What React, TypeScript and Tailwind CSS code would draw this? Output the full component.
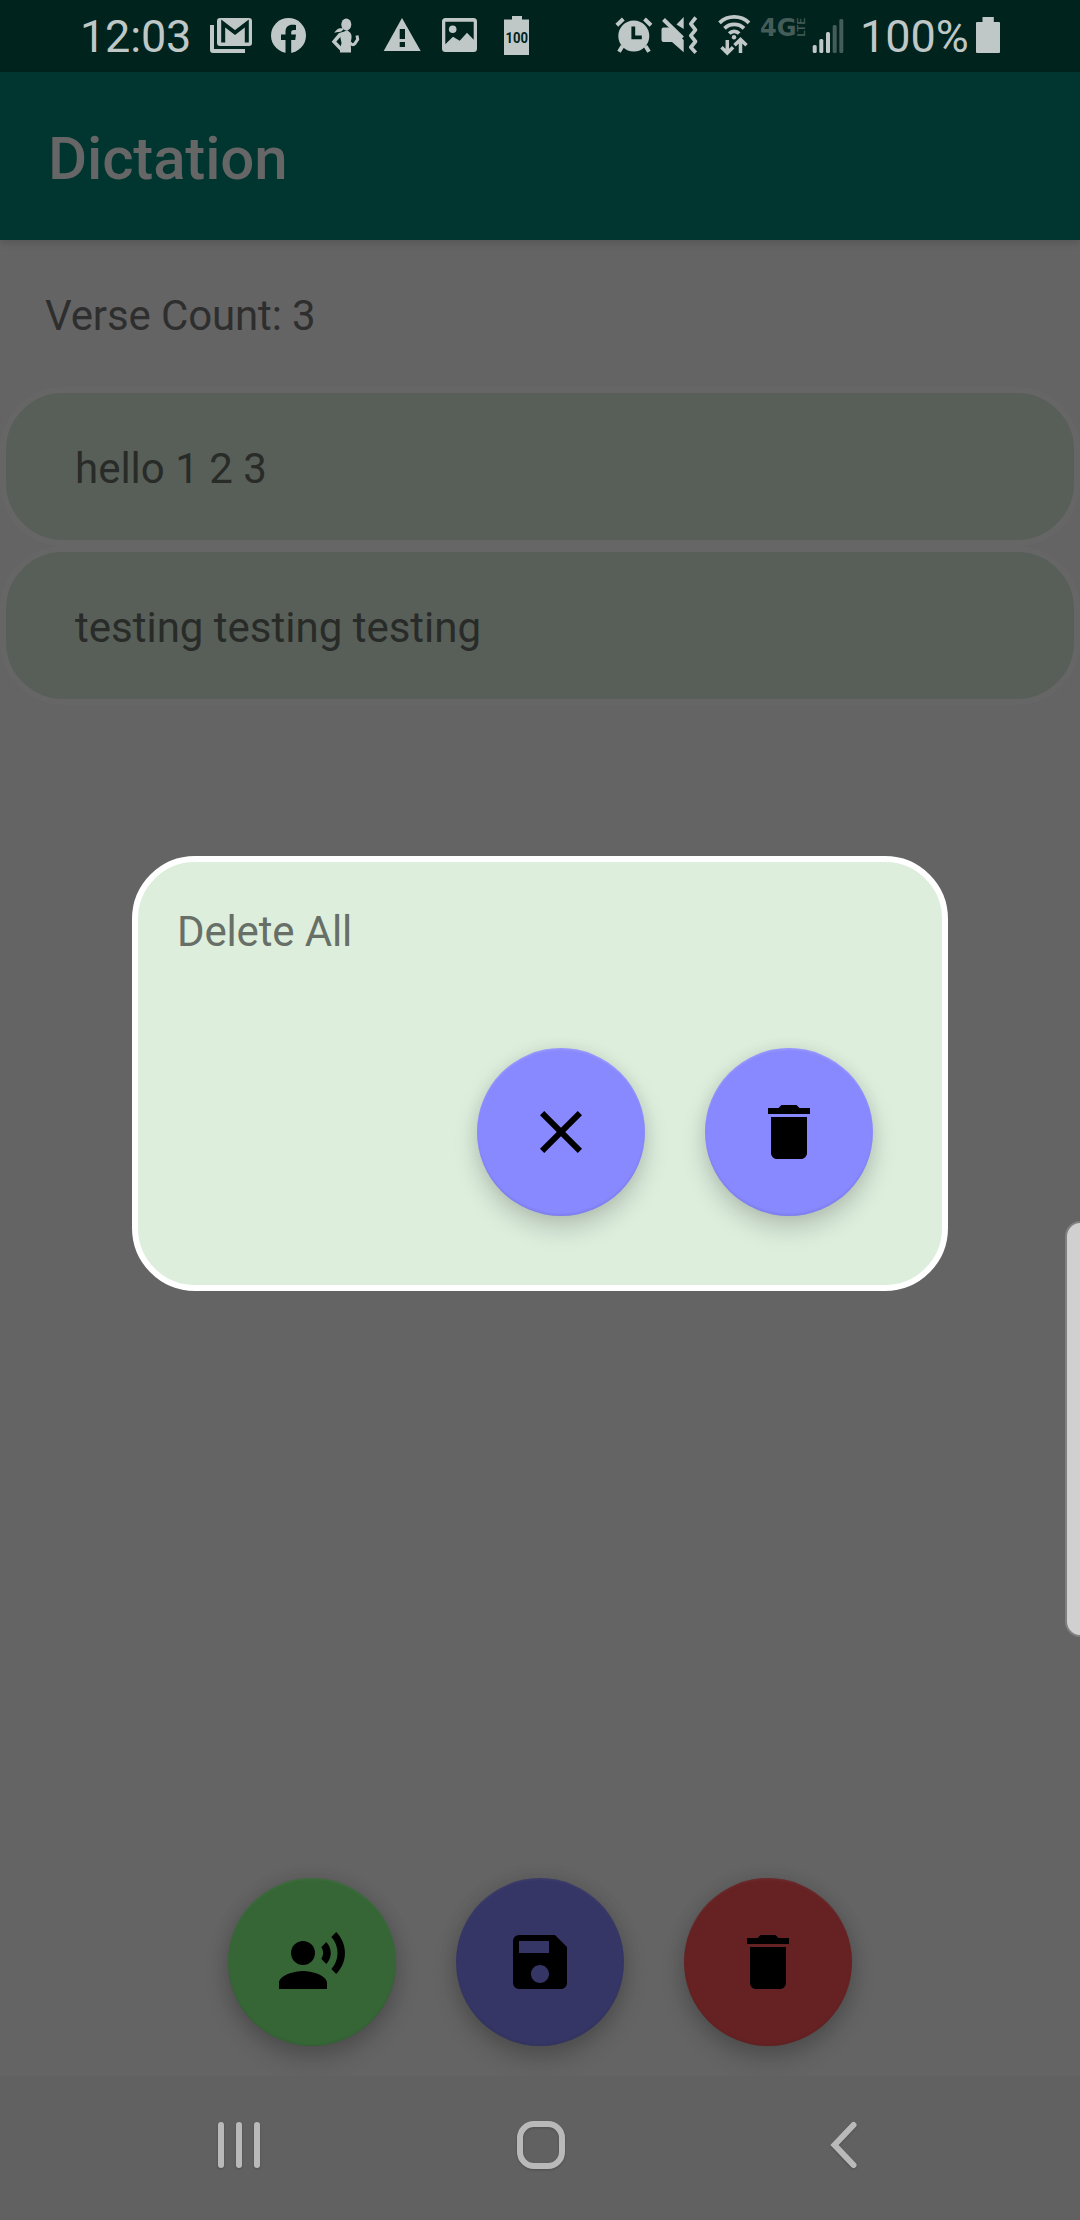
import React from "react";
import { MdClose, MdDelete, MdRecordVoiceOver, MdSave } from "react-icons/md";

const LIGHT = "#bfc8c6";
const DARK = "#00231e";
const DIM = "#455d59";

/* One slot of the status bar: x is the slot's left edge, w its width. */
function Slot({ x, w, children }: { x: number; w: number; children: React.ReactNode }) {
  return (
    <svg className="block shrink-0" width={w} height={72} viewBox={`${x} 0 ${w} 72`} fill={LIGHT}>
      {children}
    </svg>
  );
}

function StatusBar() {
  return (
    <header className="flex h-[72px] shrink-0 items-start bg-[#00231e] pl-[80px] text-[45px] leading-[73px] text-[#bfc8c6]">
      <span className="block w-[120px] shrink-0 whitespace-nowrap tracking-[-0.2px]">12:03</span>
      <Slot x={200} w={60}>
        <path d="M210 25h4v24h31v4h-32a3 3 0 0 1-3-3z" />
        <rect x="217" y="18" width="35" height="28" rx="3" />
        <path d="M223.2 42.5V23.5L235 32.5l11.8-9V42.5" fill="none" stroke={DARK} strokeWidth="4" />
      </Slot>
      <Slot x={260} w={60}>
        <circle cx="288.5" cy="35.5" r="17.5" />
        <path
          fill={DARK}
          d="M285.5 54V40H281v-5.500h4.500V32c0-4.800 2.700-7.200 7-7.200 1.500 0 3 .2 3.500.3v4.900h-2.200c-2 0-2.600 1-2.600 2.500v2h4.800l-.8 5.500h-4V54z"
        />
      </Slot>
      <Slot x={320} w={60}>
        <ellipse cx="346.300" cy="24.500" rx="5" ry="6" />
        <path d="M334 32.500c2-1 2.500-4 6-4.300 1.500-.2 2.800.3 4.200-.4-1 2.800-3 4.200-5.400 4.200-1.800 0-3 .8-4.800.5z" />
        <path d="M339.500 33c3-1.500 5.500-1 7.500-3l3 2.500c2.500 2.500 1.500 6.500.7 10L351 49v3.500h-11V49.500l1.500-6.500z" />
        <path d="M340.500 34l-6.500 7.700 7 7.300" fill="none" stroke={LIGHT} strokeWidth="3.500" />
        <path d="M350 42.500c1.500 2.500 3.500 2.800 4.700 1.300l3-4.500-.7-3.800" fill="none" stroke={LIGHT} strokeWidth="3" />
      </Slot>
      <Slot x={380} w={56}>
        <path d="M402 18l18.700 33H383.700z" />
        <path fill={DARK} d="M399.700 29h5.300v10h-5.300zM399.700 42h5.300v5h-5.300z" />
      </Slot>
      <Slot x={436} w={58}>
        <rect x="442" y="18" width="35" height="34" rx="3.500" />
        <path fill={DARK} d="M445.300 21.700h28.400v18l-6.700-7-7.300 8-6.700-4-7.700 7.500z" />
        <circle cx="452.700" cy="29.300" r="3.800" />
      </Slot>
      <Slot x={494} w={112}>
        <path d="M504 19.500h8V16h10v3.500h7V55h-25z" />
        <text x="505.500" y="43" fill={DARK} fontSize="15" fontWeight="700" textLength="22.500" lengthAdjust="spacingAndGlyphs">
          100
        </text>
      </Slot>
      <Slot x={606} w={50}>
        <circle cx="633.800" cy="36" r="15.500" />
        <path
          d="M616.800 25.200l6.500-6.200M651 25.200L644.500 19M622.500 46l-3.500 5.700M645.500 46l3.500 5.700"
          fill="none"
          stroke={LIGHT}
          strokeWidth="4"
        />
        <path d="M633.300 26.500v10.800h8.500" fill="none" stroke={DARK} strokeWidth="3.800" />
      </Slot>
      <Slot x={656} w={56}>
        <path d="M661.500 29.500a2 2 0 0 1 2-2h7.500L683.700 40v12.300L672 42h-8.500a2 2 0 0 1-2-2z" />
        <path d="M676.500 24.500l7.200-7.500v12z" />
        <path d="M663.500 19.500l19 18.500" stroke={LIGHT} strokeWidth="4" />
        <path
          d="M695.800 17.500l-5 6.300 4.700 6-4.700 5.900 4.700 5.800-4.700 5.700 5 5.500"
          fill="none"
          stroke={LIGHT}
          strokeWidth="3.700"
          strokeLinejoin="round"
        />
      </Slot>
      <Slot x={712} w={44}>
        <g fill="none" stroke={LIGHT} strokeWidth="3.800">
          <path d="M719.500 22.800a21.500 21.500 0 0 1 29.500 0" />
          <path d="M724.500 28.300a14 14 0 0 1 19.500 0" />
          <path d="M729.200 33.500a7 7 0 0 1 10 0" />
          <path d="M727.300 40v12M721.500 47.300l5.800 5.700 5.800-5.700M740.500 53V40M734.500 45.200l6-5.700 6 5.700" strokeWidth="3.500" />
        </g>
        <circle cx="734" cy="37.300" r="2.200" />
      </Slot>
      <Slot x={756} w={54}>
        <g fill={DIM}>
          <text
            x="760"
            y="36"
            fontSize="24.500"
            fontWeight="700"
            fontFamily="DejaVu Sans, sans-serif"
            textLength="36.500"
            lengthAdjust="spacingAndGlyphs"
          >
            4G
          </text>
          <text
            transform="translate(805 36.500) rotate(-90)"
            fontSize="11"
            fontWeight="500"
            textLength="18.500"
            lengthAdjust="spacingAndGlyphs"
          >
            LTE
          </text>
        </g>
      </Slot>
      <Slot x={810} w={50}>
        <rect x="812.700" y="45" width="4" height="8" rx="1.500" />
        <rect x="819.300" y="39" width="4" height="14" rx="1.500" />
        <rect x="826" y="32" width="4" height="21" rx="1.500" />
        <rect x="832.700" y="25" width="4" height="28" rx="1.500" fill={DIM} />
        <rect x="839.300" y="19" width="4" height="34" rx="1.500" fill={DIM} />
      </Slot>
      <span className="block w-[110px] shrink-0 whitespace-nowrap">100%</span>
      <Slot x={970} w={40}>
        <path d="M976 23a1 1 0 0 1 1-1h5.500v-5h11.300v5h5.200a1 1 0 0 1 1 1v29a1 1 0 0 1-1 1h-22a1 1 0 0 1-1-1z" />
      </Slot>
    </header>
  );
}

function Fab({ className, label, children }: { className: string; label: string; children: React.ReactNode }) {
  return (
    <button
      aria-label={label}
      className={`flex size-[168px] shrink-0 items-center justify-center rounded-full text-[72px] text-black ${className}`}
    >
      {children}
    </button>
  );
}

const DIMMED_SHADOW =
  "shadow-[0_12px_24px_rgba(0,0,0,0.2),0_0_18px_rgba(0,0,0,0.1),inset_0_-2px_2px_rgba(0,0,0,0.05),inset_0_2px_2px_rgba(255,255,255,0.03)]";
const LIT_SHADOW =
  "shadow-[0_12px_24px_rgba(0,0,0,0.18),0_0_16px_rgba(0,0,0,0.06),inset_0_-2px_2px_rgba(0,0,0,0.07),inset_0_2px_2px_rgba(255,255,255,0.12)]";

const verses = ["hello 1 2 3", "testing testing testing"];

export default function App() {
  return (
    <div className="relative flex h-[2220px] w-[1080px] flex-col overflow-hidden bg-[#646464] font-['Roboto',sans-serif]">
      <StatusBar />
      <div className="z-10 flex h-[168px] shrink-0 items-center bg-[#003530] pt-[5px] pl-12 shadow-[0_3px_8px_rgba(0,0,0,0.14)]">
        <h1 className="text-[60px] leading-[70px] font-medium tracking-[-0.15px] text-[#666666]">Dictation</h1>
      </div>

      <main className="flex flex-1 flex-col">
        <p className="h-[147px] shrink-0 pt-12 pl-[45px] text-[42px] leading-[56px] tracking-[-0.13px] text-[#2e2e2e]">
          Verse Count: 3
        </p>
        <ul>
          {verses.map((v) => (
            <li
              key={v}
              className="h-[159px] rounded-[63px] border-6 border-[#666666] bg-[#585f58] pt-12 pl-[69px] text-[42px] leading-[56px] text-[#282b28]"
            >
              {v}
            </li>
          ))}
        </ul>
        <div className="mt-auto mb-[30px] flex justify-center gap-[60px]">
          <Fab label="Record" className={`bg-[#366636] ${DIMMED_SHADOW}`}>
            <MdRecordVoiceOver />
          </Fab>
          <Fab label="Save" className={`bg-[#363666] ${DIMMED_SHADOW}`}>
            <MdSave />
          </Fab>
          <Fab label="Delete all" className={`bg-[#662222] ${DIMMED_SHADOW}`}>
            <MdDelete />
          </Fab>
        </div>
      </main>

      <nav className="z-10 flex h-[144px] shrink-0 items-start justify-between bg-[#616161] px-[215px] pt-[42px]">
        <svg className="drop-shadow-[0_1px_1px_rgba(0,0,0,0.2)]" width="48" height="54" fill="#b9b9b9">
          <rect x="3" y="4" width="6" height="46" rx="3" />
          <rect x="21" y="4" width="6" height="46" rx="3" />
          <rect x="39" y="4" width="6" height="46" rx="3" />
        </svg>
        <svg className="drop-shadow-[0_1px_1px_rgba(0,0,0,0.2)]" width="54" height="54" fill="none" stroke="#b9b9b9" strokeWidth="6">
          <rect x="7" y="6" width="42" height="42" rx="14" />
        </svg>
        <svg className="drop-shadow-[0_1px_1px_rgba(0,0,0,0.2)]" width="48" height="54" fill="none" stroke="#b9b9b9" strokeWidth="6" strokeLinecap="round">
          <path d="M36.500 7L17.500 27l19 20" />
        </svg>
      </nav>

      <section
        role="dialog"
        className="absolute top-[856px] left-[132px] z-20 flex h-[435px] w-[816px] flex-col rounded-[63px] border-6 border-white bg-[#ddeedd] pt-[42px] pr-[69px] pl-[39px]"
      >
        <p className="text-[42px] leading-[56px] tracking-[-0.15px] text-[#676f67]">Delete All</p>
        <div className="mt-[88px] flex justify-end gap-[60px]">
          <Fab label="Cancel" className={`bg-[#8888ff] ${LIT_SHADOW}`}>
            <MdClose />
          </Fab>
          <Fab label="Confirm delete" className={`bg-[#8888ff] ${LIT_SHADOW}`}>
            <MdDelete />
          </Fab>
        </div>
      </section>

      {/* Edge panel handle, half off the right side of the screen */}
      <div className="absolute top-[1221px] -right-4 z-20 h-[416px] w-[31px] rounded-[17px] border-2 border-[#808080] bg-[#d0d0d0]" />
    </div>
  );
}
